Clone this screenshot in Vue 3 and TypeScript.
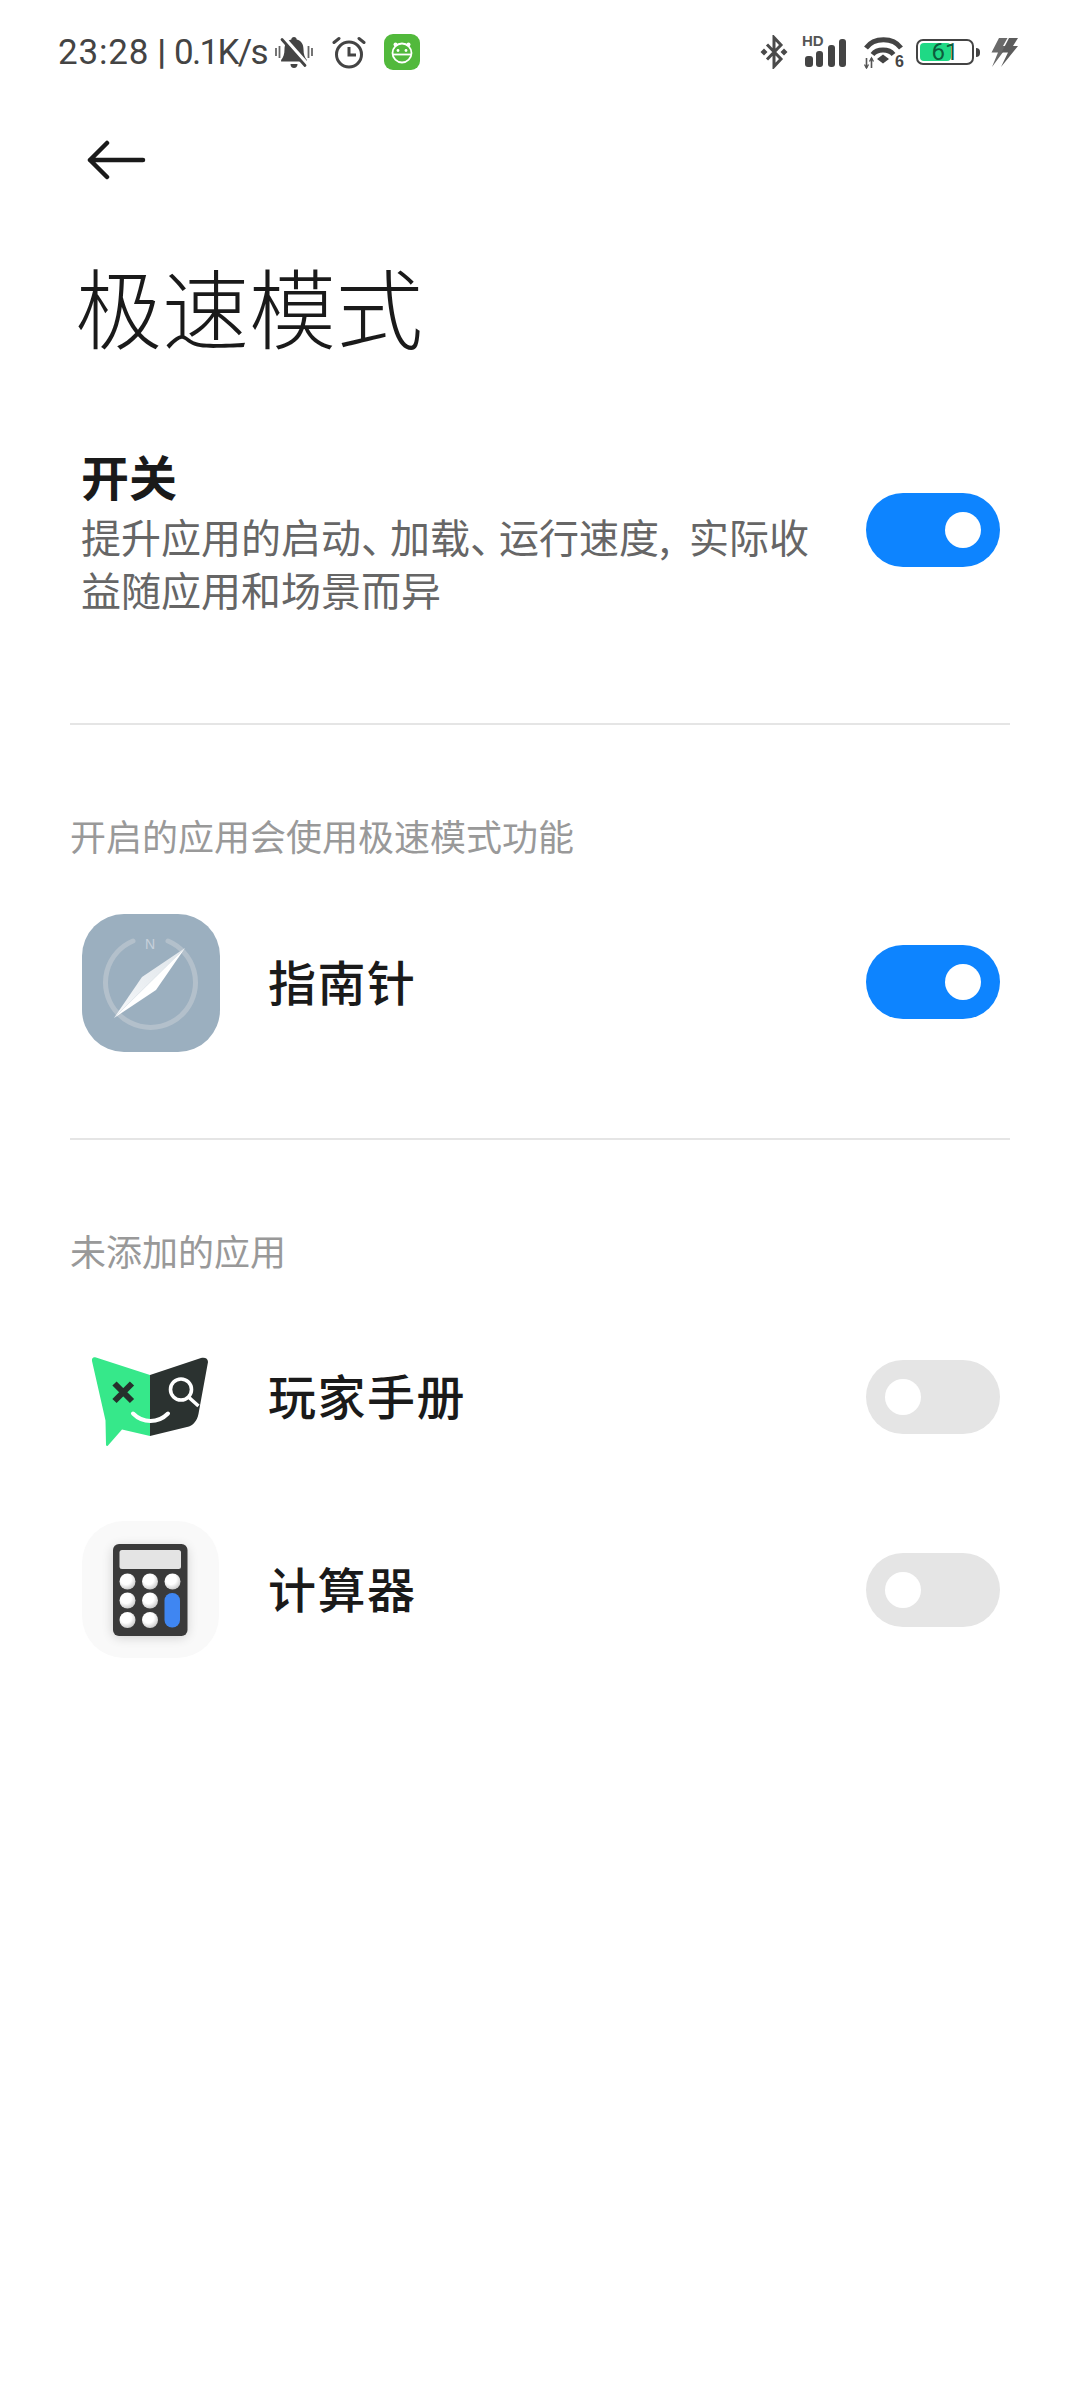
<template>
  <div class="screen">
    <header class="status-bar">
      <div class="status-left">
        <span class="clock"><span class="clock-time">23:28</span><span class="clock-sep">|</span><span class="clock-speed">0.1K/s</span></span>
        <!-- muted bell -->
        <svg class="ic-bell" width="38" height="33" viewBox="0 0 38 33">
          <path d="M19 1c1.600 0 2.600 1 2.700 2.600 4.600 1.200 6.800 5 6.800 9.600 0 5 1.200 8 3.400 10.800v1.600H6.100v-1.600C8.300 21.200 9.500 18.200 9.500 13.200c0-4.600 2.200-8.400 6.800-9.600C16.400 2 17.400 1 19 1z" fill="#444" />
          <path d="M15.500 28h7c0 2.400-1.400 4-3.500 4s-3.500-1.600-3.500-4z" fill="#444" />
          <path d="M9.500 2.500l23 26" stroke="#fff" stroke-width="4" />
          <path d="M7 3.500l23 26" stroke="#444" stroke-width="2.800" stroke-linecap="round" />
          <path d="M1 12v8M4.500 10v12M33.500 10v12M37 12v8" stroke="#666" stroke-width="1.800" />
        </svg>
        <!-- alarm clock -->
        <svg class="ic-alarm" width="34" height="33" viewBox="0 0 34 33">
          <circle cx="17" cy="18.500" r="12.500" fill="none" stroke="#444" stroke-width="3" />
          <path d="M17 11v8h7" fill="none" stroke="#444" stroke-width="3" />
          <path d="M2 6.500L7 2.500M32 6.500L27 2.500" stroke="#444" stroke-width="3" stroke-linecap="round" />
        </svg>
        <!-- green robot app badge -->
        <svg class="ic-app" width="36" height="36" viewBox="0 0 36 36">
          <rect width="36" height="36" rx="9" fill="#52b93c" />
          <circle cx="11.500" cy="10.500" r="2" fill="#fff" />
          <circle cx="24.500" cy="10.500" r="2" fill="#fff" />
          <circle cx="18" cy="19" r="9.500" fill="none" stroke="#fff" stroke-width="1.800" />
          <path d="M8.500 20.500h19" stroke="#fff" stroke-width="1.800" />
          <circle cx="14" cy="16.500" r="1.400" fill="#fff" />
          <circle cx="22" cy="16.500" r="1.400" fill="#fff" />
        </svg>
      </div>
      <div class="status-right">
        <svg class="ic-bt" width="28" height="34" viewBox="0 0 28 34">
          <path d="M7 9.500l14 14.500-7 7.500V2.500l7 7.500L7 24.500" fill="none" stroke="#4a4a4a" stroke-width="3" />
          <path d="M4 13.500l3.500 3.500L4 20.500.500 17zM24 13.500l3.500 3.500-3.500 3.500-3.500-3.500z" fill="#4a4a4a" />
        </svg>
        <div class="signal">
          <span class="hd">HD</span>
          <svg width="42" height="29" viewBox="0 0 42 29">
            <rect x="0" y="17" width="8" height="11" rx="3" fill="#444" />
            <rect x="11" y="12" width="7" height="16" rx="3" fill="#444" />
            <rect x="23" y="6" width="7" height="22" rx="3" fill="#444" />
            <rect x="34" y="0" width="7" height="28" rx="3" fill="#444" />
          </svg>
        </div>
        <div class="wifi">
          <svg width="42" height="33" viewBox="0 0 42 33">
            <path d="M2 12C10 1 29 1 37 12" fill="none" stroke="#444" stroke-width="4.800" />
            <path d="M8.500 18.500C13 12.500 25 12.500 29.500 18.500" fill="none" stroke="#444" stroke-width="4.800" />
            <path d="M13 23l6-4.500 6 4.500-6 4.500z" fill="#444" />
            <path d="M2.500 22v10M7.500 22v10" fill="none" stroke="#555" stroke-width="1.600" />
            <path d="M0.500 28.500l2 3.500 2-3.500M5.500 25.500l2-3.500 2 3.500" fill="none" stroke="#555" stroke-width="1.400" />
          </svg>
          <span class="wifi-gen">6</span>
        </div>
        <div class="battery">
          <div class="battery-shell">
            <div class="battery-fill" :style="{ width: battery + '%' }"></div>
            <span class="battery-num">{{ battery }}</span>
          </div>
          <span class="battery-cap"></span>
        </div>
        <!-- double charging bolt -->
        <svg class="ic-bolt" width="29" height="31" viewBox="0 0 29 31">
          <path d="M9 1h8.500l-4.500 8h4.500L2 30l6-14.500H1.500z" fill="#6a6a6a" />
          <path d="M19 1h9l-5 8h5L11 30l7-14.500h-6.500z" fill="#5c5c5c" />
        </svg>
      </div>
    </header>

    <nav class="nav">
      <svg width="60" height="40" viewBox="0 0 60 40">
        <path d="M57 20H4M21 3L4 20l17 17" fill="none" stroke="#1a1a1a" stroke-width="4.500" stroke-linecap="round" stroke-linejoin="round" />
      </svg>
    </nav>

    <h1 class="title">极速模式</h1>

    <section class="master">
      <div class="master-text">
        <div class="master-name">开关</div>
        <p class="master-desc">提升应用的启动<span class="dun">、</span>加载<span class="dun">、</span>运行速度, 实际收<br />益随应用和场景而异</p>
      </div>
      <button class="toggle master-toggle on"><span class="knob"></span></button>
    </section>

    <hr class="divider" />

    <div class="group-label first">开启的应用会使用极速模式功能</div>

    <div class="app-row compass-row">
      <svg class="app-icon" width="138" height="138" viewBox="0 0 138 138">
        <defs>
          <linearGradient id="needleLight" x1="0" y1="1" x2="1" y2="0">
            <stop offset="0" stop-color="#f5f7f9" />
            <stop offset="1" stop-color="#dfe5ea" />
          </linearGradient>
        </defs>
        <rect width="138" height="138" rx="42" fill="#9bafbf" />
        <path d="M51 27A45 45 0 1 0 86 27" fill="none" stroke="#b3c0cb" stroke-width="5" stroke-linecap="round" />
        <text x="68" y="35" class="compass-n">N</text>
        <path d="M103 34L60 63 32 104z" fill="url(#needleLight)" />
        <path d="M103 34L74 76 32 104z" fill="#fff" />
      </svg>
      <span class="app-name">指南针</span>
      <button class="toggle on"><span class="knob"></span></button>
    </div>

    <hr class="divider second" />

    <div class="group-label">未添加的应用</div>

    <div class="app-row guide-row">
      <svg class="app-icon" width="138" height="138" viewBox="0 0 138 138">
        <path d="M14 29.500L68 47v61L40 101.500 26 117.500c-1 1-1.800.5-2-1L23.500 92.500 10 33c-.5-3 1.500-4.500 4-3.500z" fill="#36e88a" />
        <path d="M68 47l51-17c4-1 7 .500 7 4l-9 49c-1 8-4 13-10 15.500L68 108z" fill="#2b3230" />
        <path d="M32.500 55.500l17.500 17.500M50 55.500L32.500 73" stroke="#26302c" stroke-width="6" />
        <circle cx="99" cy="61.500" r="10.500" fill="none" stroke="#fff" stroke-width="3.600" />
        <path d="M107 69.500l9.500 8.500" stroke="#fff" stroke-width="3.600" />
        <path d="M51 85.500c10 10 25 10 35 0" fill="none" stroke="#fff" stroke-width="4" stroke-linecap="round" />
      </svg>
      <span class="app-name">玩家手册</span>
      <button class="toggle"><span class="knob"></span></button>
    </div>

    <div class="app-row calc-row">
      <svg class="app-icon" width="138" height="138" viewBox="0 0 138 138">
        <defs>
          <radialGradient id="keyFace" cx="0.400" cy="0.350" r="0.750">
            <stop offset="0.450" stop-color="#fff" />
            <stop offset="1" stop-color="#bdbdbd" />
          </radialGradient>
          <filter id="bodyShadow" x="-30%" y="-30%" width="160%" height="160%">
            <feGaussianBlur stdDeviation="6" />
          </filter>
        </defs>
        <rect width="137" height="137" rx="42" fill="#f9f9f9" />
        <rect x="31" y="26" width="74" height="90" rx="6" fill="#000" opacity="0.180" filter="url(#bodyShadow)" />
        <rect x="31" y="23" width="74.500" height="92" rx="6" fill="#3a3a3a" />
        <rect x="37.500" y="29" width="61.500" height="19" rx="2.500" fill="#e4e4e4" />
        <circle v-for="k in calcKeys" :key="k.x + '-' + k.y" :cx="k.x" :cy="k.y" r="8" fill="url(#keyFace)" />
        <rect x="82.500" y="72" width="15.500" height="34.500" rx="7.500" fill="#3f86f2" />
      </svg>
      <span class="app-name">计算器</span>
      <button class="toggle"><span class="knob"></span></button>
    </div>
  </div>
</template>

<script setup lang="ts">
const battery = 61

const calcKeys = [
  { x: 45.5, y: 60.5 },
  { x: 68, y: 60.5 },
  { x: 90.5, y: 60.5 },
  { x: 45.5, y: 79.5 },
  { x: 68, y: 79.5 },
  { x: 45.5, y: 99 },
  { x: 68, y: 99 },
]
</script>

<style scoped>
.screen {
  width: 1080px;
  height: 2400px;
  box-sizing: border-box;
  padding: 0 70px;
  overflow: hidden;
  background: #fff;
  color: #1a1a1a;
  font-family: "Noto Sans CJK SC", "Noto Sans", sans-serif;
}

.status-bar {
  display: flex;
  justify-content: space-between;
  align-items: center;
  height: 104px;
  margin: 0 -9px 0 -12px;
}

.status-left,
.status-right {
  display: flex;
  align-items: center;
}

.clock {
  display: flex;
  align-items: center;
  font-family: Roboto, "Noto Sans", sans-serif;
  font-size: 35px;
  color: #444;
  white-space: nowrap;
}

.clock-time {
  letter-spacing: 0.8px;
}

.clock-sep {
  margin: 0 8px;
  font-weight: 700;
}

.clock-speed {
  letter-spacing: -1.7px;
}

.ic-bell {
  margin-left: 8px;
}

.ic-alarm {
  margin-left: 19px;
}

.ic-app {
  margin-left: 18px;
}

.ic-bt {
  margin-right: 14px;
}

.signal {
  position: relative;
  width: 45px;
  height: 32px;
  margin-right: 17px;
  display: flex;
  align-items: flex-end;
  justify-content: flex-end;
}

.hd {
  position: absolute;
  left: 0;
  top: -3px;
  font-family: "Liberation Sans", sans-serif;
  font-size: 15px;
  line-height: 15px;
  font-weight: 700;
  color: #555;
}

.wifi {
  position: relative;
  width: 42px;
  height: 33px;
  margin-right: 10px;
}

.wifi-gen {
  position: absolute;
  right: 2px;
  bottom: 0;
  font-family: "Liberation Sans", sans-serif;
  font-size: 16px;
  line-height: 14px;
  font-weight: 700;
  color: #444;
}

.battery {
  display: flex;
  align-items: center;
  margin-right: 10px;
}

.battery-shell {
  position: relative;
  width: 58px;
  height: 26px;
  box-sizing: border-box;
  border: 2px solid #444;
  border-radius: 7px;
  padding: 2px;
}

.battery-fill {
  height: 100%;
  background: #1fd985;
  border-radius: 4px;
}

.battery-num {
  position: absolute;
  inset: 0;
  text-align: center;
  font-family: Roboto, sans-serif;
  font-size: 24px;
  line-height: 22px;
  color: #0d5c3c;
}

.battery-cap {
  width: 4px;
  height: 9px;
  margin-left: 2px;
  background: #444;
  border-radius: 0 4px 4px 0;
}

.nav {
  display: flex;
  align-items: center;
  height: 112px;
  padding-left: 16px;
}

.title {
  margin: 29px 0 0 5px;
  font-size: 87px;
  line-height: 120px;
  font-weight: 300;
  color: #1a1a1a;
}

.master {
  display: flex;
  align-items: flex-start;
  justify-content: space-between;
  margin-top: 83px;
  padding: 0 10px 0 11px;
}

.master-text {
  width: 745px;
}

.master-name {
  font-size: 48px;
  line-height: 54px;
  margin-bottom: 8px;
  font-weight: 700;
  color: #1a1a1a;
}

.master-desc {
  margin: 0;
  font-size: 40px;
  line-height: 53px;
  word-spacing: 10px;
  color: #666;
}

/* the enumeration comma sits tighter than a full-width cell */
.dun {
  letter-spacing: -11px;
}

.master-toggle {
  margin-top: 45px;
}

.toggle {
  position: relative;
  flex: none;
  width: 134px;
  height: 74px;
  padding: 0;
  border: 0;
  border-radius: 37px;
  background: #e5e5e5;
}

.toggle.on {
  background: #0d84ff;
}

.knob {
  position: absolute;
  top: 19px;
  left: 19px;
  width: 36px;
  height: 36px;
  border-radius: 50%;
  background: #fff;
}

.toggle.on .knob {
  left: auto;
  right: 19px;
}

.divider {
  height: 2px;
  margin: 107px 0 0;
  border: 0;
  background: #e5e5e5;
}

.divider.second {
  margin-top: 86px;
}

.group-label {
  margin-top: 85px;
  font-size: 36px;
  line-height: 50px;
  color: #999;
}

.app-row {
  display: flex;
  align-items: center;
  padding: 0 10px 0 12px;
}

.compass-row {
  margin-top: 54px;
}

.compass-row .toggle {
  margin-bottom: 3px;
}

.guide-row {
  margin-top: 53px;
}

.calc-row {
  margin-top: 55px;
}

.app-icon {
  flex: none;
}

.app-name {
  flex: 1;
  margin-left: 48px;
  padding-bottom: 6px;
  font-size: 48px;
  line-height: 64px;
  font-weight: 500;
  letter-spacing: 1.5px;
  color: #1a1a1a;
}

.compass-n {
  font-family: "Liberation Sans", sans-serif;
  font-size: 14px;
  text-anchor: middle;
  fill: #c6d0da;
}
</style>

<style>
html,
body {
  background: #fff;
}
</style>
